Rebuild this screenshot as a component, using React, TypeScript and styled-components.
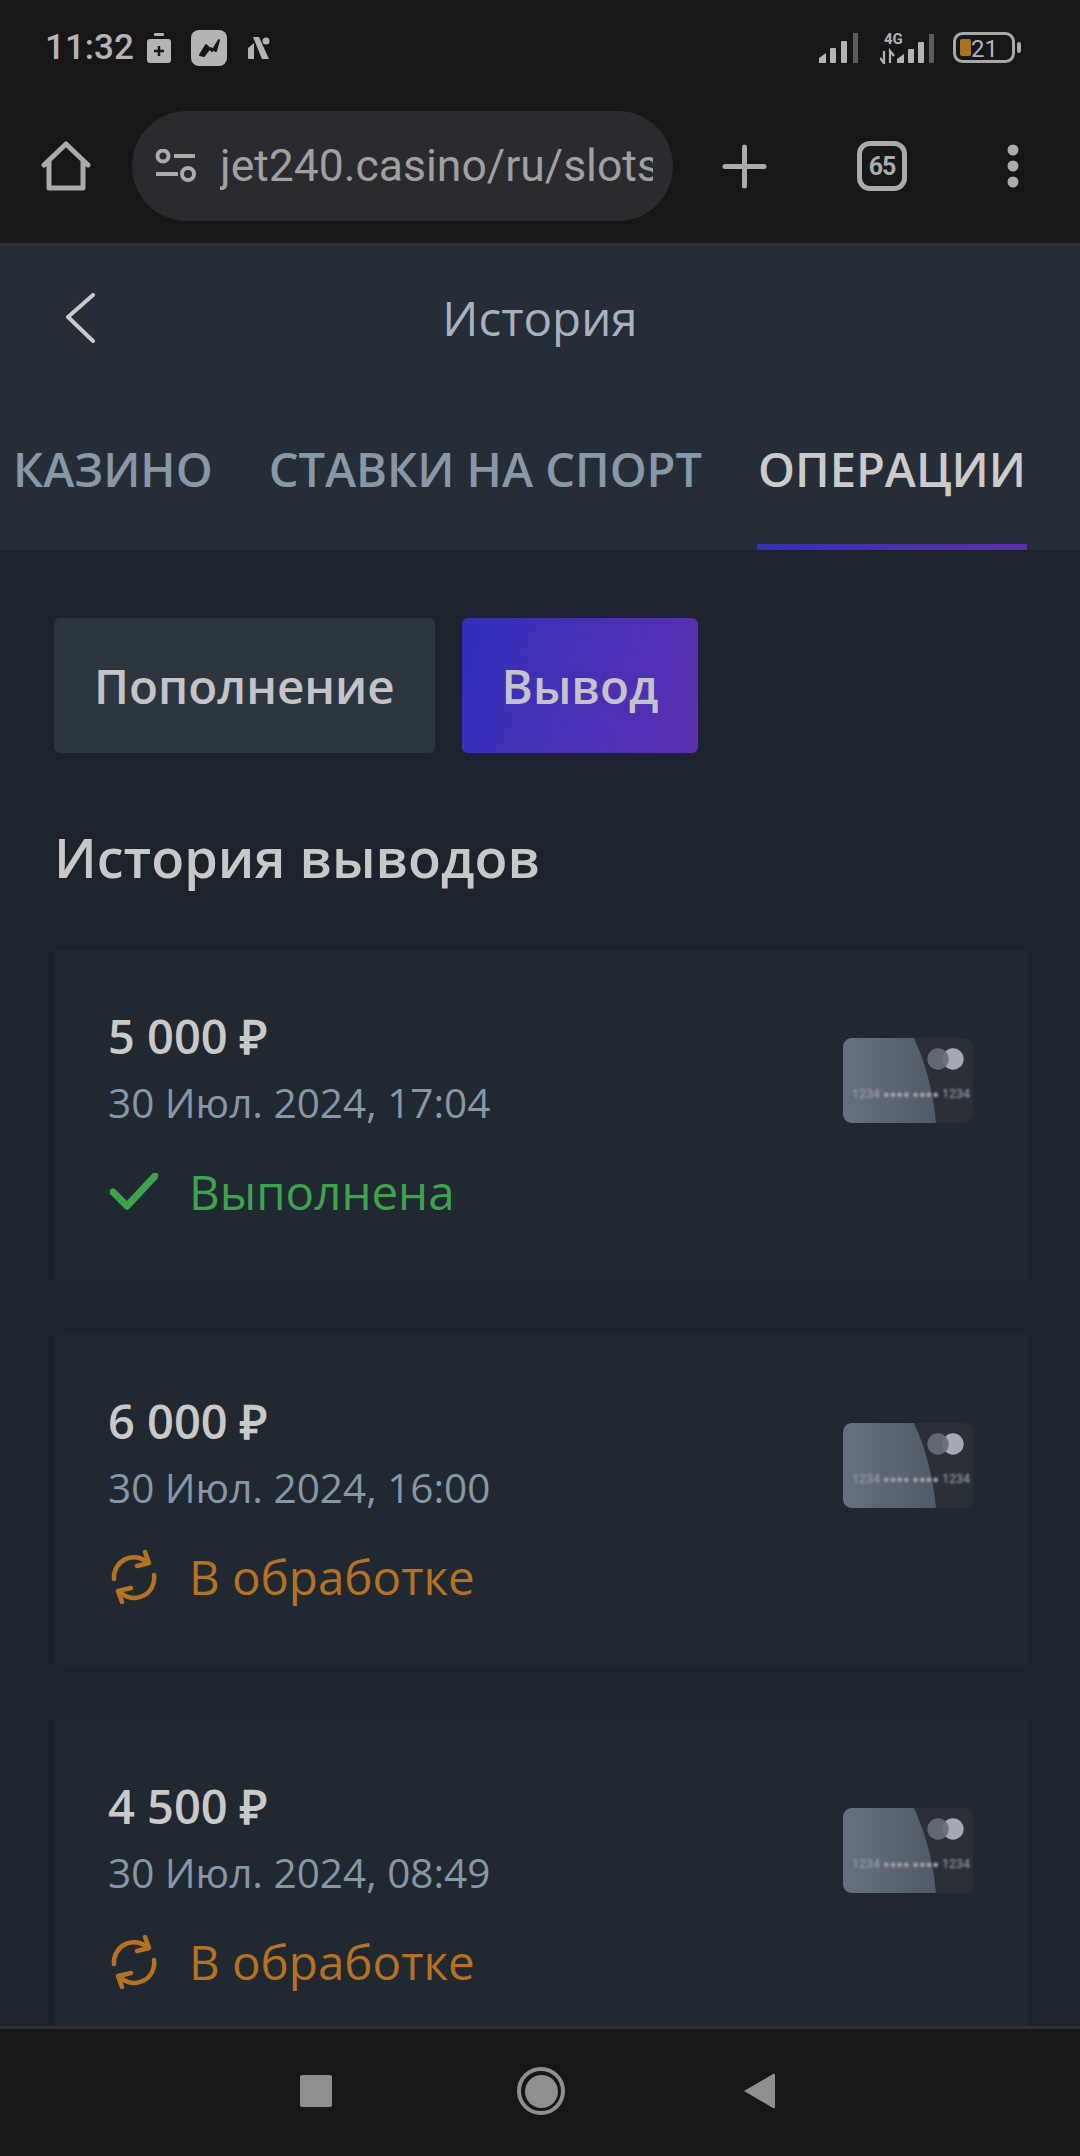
import styled, { createGlobalStyle } from "styled-components";

const GlobalStyle = createGlobalStyle`
  html, body {
    margin: 0;
    padding: 0;
    background: #171717;
  }
  * {
    box-sizing: border-box;
  }
`;

const Screen = styled.div`
  width: 1080px;
  height: 2156px;
  display: flex;
  flex-direction: column;
  overflow: hidden;
  font-family: "Open Sans", "Liberation Sans", sans-serif;
`;

const Chrome = styled.div`
  height: 246px;
  flex: none;
  background: #171717;
  border-bottom: 3px solid #2e3338;
  font-family: Roboto, "Liberation Sans", sans-serif;
`;

const StatusBar = styled.div`
  height: 96px;
  padding: 0 59px 0 45px;
  display: flex;
  align-items: center;
  justify-content: space-between;
  color: #b4b4b4;
`;

const StatusGroup = styled.div`
  display: flex;
  align-items: center;
`;

const Clock = styled.span`
  font-size: 35px;
  font-weight: 500;
  line-height: 40px;
`;

const Toolbar = styled.div`
  height: 110px;
  margin-top: 15px;
  padding: 0 41px;
  display: flex;
  align-items: center;
  color: #ababab;
`;

const UrlPill = styled.div`
  width: 541px;
  height: 110px;
  margin: 0 49px 0 41px;
  padding: 0 20px 0 23px;
  display: flex;
  align-items: center;
  gap: 23px;
  border-radius: 55px;
  background: #292b2f;
  flex: none;
`;

const UrlText = styled.span`
  font-size: 44.5px;
  color: #a0a0a0;
  white-space: nowrap;
  overflow: hidden;
`;

const TabCount = styled.div`
  width: 50px;
  height: 50px;
  margin-left: 90px;
  margin-right: 100px;
  border: 5px solid #ababab;
  border-radius: 13px;
  display: flex;
  align-items: center;
  justify-content: center;
  font-size: 25px;
  font-weight: 700;
  letter-spacing: -1px;
`;

const Header = styled.header`
  height: 304px;
  flex: none;
  background: #252d38;
  display: flex;
  flex-direction: column;
`;

const TitleRow = styled.div`
  height: 143px;
  position: relative;
  display: flex;
  align-items: center;
  justify-content: center;
  color: #a7b2c0;
  font-size: 47.5px;
`;

const BackIcon = styled.svg`
  position: absolute;
  left: 65px;
  top: 47px;
`;

const TabStrip = styled.nav`
  display: flex;
  gap: 54px;
  padding: 30px 0 0 12px;
  flex: 1;
`;

const Tab = styled.div<{ $active?: boolean }>`
  height: 131px;
  padding: 19px 1px 0;
  font-size: 47px;
  font-weight: 600;
  white-space: nowrap;
  line-height: 62px;
  color: ${(p) => (p.$active ? "#cbcbcb" : "#8798a9")};
  border-bottom: 6px solid transparent;
  border-image: ${(p) =>
    p.$active ? "linear-gradient(90deg, #3530b8, #5c2fb0) 1" : "none"};
`;

const Content = styled.main`
  flex: 1;
  min-height: 0;
  overflow: hidden;
  background: #1c232c;
  padding: 68px 52px 0 54px;
`;

const Switcher = styled.div`
  display: flex;
  gap: 27px;
`;

const SwitchButton = styled.div<{ $active?: boolean }>`
  height: 135px;
  padding: 0 40px;
  display: flex;
  align-items: center;
  border-radius: 6px;
  font-size: 47.5px;
  font-weight: 600;
  color: #c4c4c8;
  background: ${(p) =>
    p.$active ? "linear-gradient(105deg, #3230bb, #5c2fb1)" : "#2c3640"};
`;

const SectionTitle = styled.h2`
  margin: 67px 0 56px;
  font-size: 54px;
  line-height: 74px;
  font-weight: 600;
  color: #c8c8c8;
`;

const CardList = styled.div`
  display: flex;
  flex-direction: column;
  gap: 55px;
`;

const Card = styled.article`
  height: 330px;
  padding: 56px 55px 0 54px;
  display: flex;
  justify-content: space-between;
  background: #202831;
  border-radius: 4px;
`;

const Amount = styled.div`
  font-size: 47px;
  line-height: 60px;
  font-weight: 600;
  color: #c9c9c9;
`;

const DateText = styled.div`
  margin-top: 9px;
  font-size: 40.5px;
  line-height: 56px;
  color: #8697a8;
`;

const Status = styled.div<{ $color: string }>`
  margin-top: 29px;
  display: flex;
  align-items: center;
  gap: 29px;
  font-size: 47.5px;
  line-height: 64px;
  color: ${(p) => p.$color};
`;

const StatusIcon = styled.div`
  width: 52px;
  display: flex;
  justify-content: center;
  flex: none;
`;

const CardThumb = styled.svg`
  margin-top: 32px;
  flex: none;
`;

const BottomNav = styled.footer`
  height: 130px;
  flex: none;
  background: #171717;
  border-top: 3px solid #2e3032;
  padding: 0 0 3px 300px;
  display: flex;
  align-items: center;
  color: #8f8f8f;
`;

const NavSquare = styled.div`
  width: 32px;
  height: 32px;
  border-radius: 2px;
  background: #8f8f8f;
  margin-right: 185px;
`;

const NavCircle = styled.div`
  width: 48px;
  height: 48px;
  border-radius: 50%;
  border: 4px solid #8f8f8f;
  display: flex;
  align-items: center;
  justify-content: center;
  margin-right: 178px;

  &::after {
    content: "";
    width: 33px;
    height: 33px;
    border-radius: 50%;
    background: #8f8f8f;
  }
`;

const SignalBars = () => (
  <svg width="40" height="30" viewBox="0 0 40 30" fill="#b4b4b4">
    <path d="M0 30V25L7 20V30Z" />
    <rect x="11" y="15" width="6" height="15" rx="1" />
    <rect x="22" y="8" width="6" height="22" rx="1" />
    <rect x="34" y="0" width="5" height="30" fill="#5c5c5c" />
  </svg>
);

const CheckIcon = () => (
  <svg width="48" height="38" viewBox="0 0 48 38" fill="none">
    <path d="M3 19L17 33L45 3" stroke="#3aa54a" strokeWidth="7" strokeLinecap="round" strokeLinejoin="round" />
  </svg>
);

const SyncIcon = () => (
  <svg width="46" height="54" viewBox="0 0 46 54" fill="none" stroke="#b8711d" strokeWidth="4.5" strokeLinecap="round" strokeLinejoin="round">
    <path d="M3 29A20 20 0 0 1 37 13" />
    <path d="M34 2L38 13L26 16" />
    <path d="M43 25A20 20 0 0 1 9 42" />
    <path d="M20 38L7 41L11 52" />
  </svg>
);

const BankCard = () => (
  <CardThumb width="130" height="85" viewBox="0 0 130 85">
    <defs>
      <linearGradient id="cardFace" x1="0" x2="1" y1="0" y2="0">
        <stop offset="0" stopColor="#667080" />
        <stop offset="1" stopColor="#515a66" />
      </linearGradient>
      <filter id="soft">
        <feGaussianBlur stdDeviation="1.2" />
      </filter>
    </defs>
    <rect width="130" height="85" rx="9" fill="#2b2f38" />
    <path d="M9 0H71C82 24 90 52 93 85H9C4 85 0 81 0 76V9C0 4 4 0 9 0Z" fill="url(#cardFace)" />
    <circle cx="110" cy="21" r="10.7" fill="#a5a9b4" />
    <circle cx="95" cy="21" r="10.7" fill="#656e7a" fillOpacity="0.92" />
    <g filter="url(#soft)" fill="#a0a5af" fontFamily="Roboto, sans-serif" fontSize="12.5">
      <text x="9" y="60">1234</text>
      <text x="40" y="60" fontSize="11">●●●● ●●●●</text>
      <text x="99" y="60">1234</text>
    </g>
  </CardThumb>
);

const withdrawals = [
  { amount: "5 000 ₽", date: "30 Июл. 2024, 17:04", status: "Выполнена", done: true },
  { amount: "6 000 ₽", date: "30 Июл. 2024, 16:00", status: "В обработке", done: false },
  { amount: "4 500 ₽", date: "30 Июл. 2024, 08:49", status: "В обработке", done: false },
];

const App = () => {
  return (
    <Screen>
      <GlobalStyle />
      <Chrome>
        <StatusBar>
          <StatusGroup>
            <Clock>11:32</Clock>
            <svg width="24" height="30" viewBox="0 0 24 30" style={{ marginLeft: 13 }}>
              <rect x="7" y="0" width="10" height="3" rx="1" fill="#b4b4b4" />
              <rect x="0" y="6" width="24" height="24" rx="3" fill="#b4b4b4" />
              <path d="M12 13V23M7 18H17" stroke="#171717" strokeWidth="2.5" />
            </svg>
            <svg width="36" height="36" viewBox="0 0 36 36" style={{ marginLeft: 20 }}>
              <rect width="36" height="36" rx="8" fill="#b4b4b4" />
              <path d="M9 25L15 15L21 21L28 10L25 21L19 18L13 26Z" fill="#171717" stroke="#171717" strokeWidth="2" strokeLinejoin="round" />
            </svg>
            <svg width="22" height="22" viewBox="0 0 22 22" style={{ marginLeft: 21 }} fill="#b4b4b4">
              <path d="M0 11L6 6V22H1C0 22 0 21 0 21Z" />
              <path d="M5 0H11L21 22H14Z" />
              <circle cx="18" cy="4" r="3.5" />
            </svg>
          </StatusGroup>
          <StatusGroup>
            <SignalBars />
            <svg width="57" height="32" viewBox="0 0 57 32" style={{ marginLeft: 21 }}>
              <text x="4" y="12" fontFamily="Roboto, sans-serif" fontSize="15" fontWeight="700" fill="#b4b4b4">4G</text>
              <path d="M4 19V31L0 26M10 31V19L14 24" stroke="#b4b4b4" strokeWidth="2.2" fill="none" />
              <g fill="#b4b4b4">
                <path d="M17 31V27L24 22V31Z" />
                <rect x="28" y="17" width="6" height="14" rx="1" />
                <rect x="38" y="10" width="6" height="21" rx="1" />
                <rect x="49" y="2" width="5" height="29" fill="#5c5c5c" />
              </g>
            </svg>
            <svg width="68" height="32" viewBox="0 0 68 32" style={{ marginLeft: 16 }}>
              <rect x="1.5" y="1.5" width="59" height="28" rx="8" fill="none" stroke="#a8a8a8" strokeWidth="3" />
              <rect x="7" y="7" width="11" height="17" rx="2" fill="#ab731c" />
              <text x="18" y="25" fontFamily="Roboto, sans-serif" fontSize="24" fill="#b4b4b4">21</text>
              <rect x="64" y="10" width="4" height="11" rx="2" fill="#a8a8a8" />
            </svg>
          </StatusGroup>
        </StatusBar>
        <Toolbar>
          <svg width="50" height="50" viewBox="0 0 50 50" fill="none" stroke="#ababab" strokeWidth="5" strokeLinejoin="round" strokeLinecap="round">
            <path d="M3 24L25 3L47 24M8 20V47H42V20" />
          </svg>
          <UrlPill>
            <svg width="42" height="34" viewBox="0 0 42 34" fill="none" stroke="#ababab" strokeWidth="4" style={{ flex: "none" }}>
              <circle cx="8" cy="7" r="5.5" />
              <path d="M19 7H40M1 25H23" />
              <circle cx="33" cy="25" r="6" />
            </svg>
            <UrlText>jet240.casino/ru/slots</UrlText>
          </UrlPill>
          <svg width="45" height="45" viewBox="0 0 45 45" stroke="#ababab" strokeWidth="5" strokeLinecap="round">
            <path d="M22.5 3V42M3 22.5H42" />
          </svg>
          <TabCount>65</TabCount>
          <svg width="12" height="44" viewBox="0 0 12 44" fill="#ababab">
            <circle cx="6" cy="6" r="5.5" />
            <circle cx="6" cy="22" r="5.5" />
            <circle cx="6" cy="38" r="5.5" />
          </svg>
        </Toolbar>
      </Chrome>
      <Header>
        <TitleRow>
          <BackIcon width="32" height="50" viewBox="0 0 32 50" fill="none" stroke="#c9c9c9" strokeWidth="4" strokeLinecap="round" strokeLinejoin="round">
            <path d="M28 2L3 24L28 48" />
          </BackIcon>
          История
        </TitleRow>
        <TabStrip>
          <Tab>КАЗИНО</Tab>
          <Tab>СТАВКИ НА СПОРТ</Tab>
          <Tab $active>ОПЕРАЦИИ</Tab>
        </TabStrip>
      </Header>
      <Content>
        <Switcher>
          <SwitchButton>Пополнение</SwitchButton>
          <SwitchButton $active>Вывод</SwitchButton>
        </Switcher>
        <SectionTitle>История выводов</SectionTitle>
        <CardList>
          {withdrawals.map((item) => (
            <Card key={item.date}>
              <div>
                <Amount>{item.amount}</Amount>
                <DateText>{item.date}</DateText>
                <Status $color={item.done ? "#3aa54a" : "#b8711d"}>
                  <StatusIcon>{item.done ? <CheckIcon /> : <SyncIcon />}</StatusIcon>
                  {item.status}
                </Status>
              </div>
              <BankCard />
            </Card>
          ))}
        </CardList>
      </Content>
      <BottomNav>
        <NavSquare />
        <NavCircle />
        <svg width="32" height="36" viewBox="0 0 32 36" fill="#8f8f8f">
          <path d="M1 18L30 1C31 0.5 32 1 32 2V34C32 35 31 35.5 30 35L1 18Z" />
        </svg>
      </BottomNav>
    </Screen>
  );
};

export default App;
